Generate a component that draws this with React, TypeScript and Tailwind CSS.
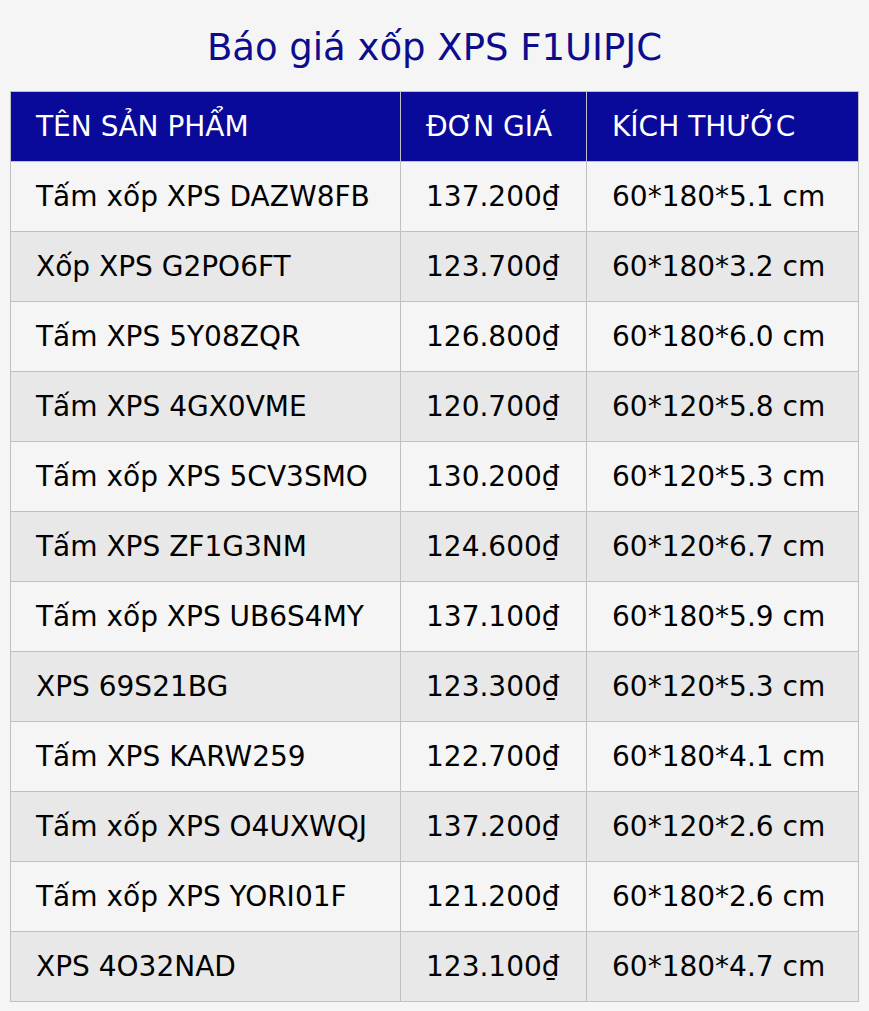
const rows: [string, string, string][] = [
  ['Tấm xốp XPS DAZW8FB', '137.200₫', '60*180*5.1 cm'],
  ['Xốp XPS G2PO6FT', '123.700₫', '60*180*3.2 cm'],
  ['Tấm XPS 5Y08ZQR', '126.800₫', '60*180*6.0 cm'],
  ['Tấm XPS 4GX0VME', '120.700₫', '60*120*5.8 cm'],
  ['Tấm xốp XPS 5CV3SMO', '130.200₫', '60*120*5.3 cm'],
  ['Tấm XPS ZF1G3NM', '124.600₫', '60*120*6.7 cm'],
  ['Tấm xốp XPS UB6S4MY', '137.100₫', '60*180*5.9 cm'],
  ['XPS 69S21BG', '123.300₫', '60*120*5.3 cm'],
  ['Tấm XPS KARW259', '122.700₫', '60*180*4.1 cm'],
  ['Tấm xốp XPS O4UXWQJ', '137.200₫', '60*120*2.6 cm'],
  ['Tấm xốp XPS YORI01F', '121.200₫', '60*180*2.6 cm'],
  ['XPS 4O32NAD', '123.100₫', '60*180*4.7 cm'],
];

export default function App() {
  return (
    <div className="min-h-[1011px] bg-[#f5f5f5] px-[10px] pt-[26px] font-['DejaVu_Sans',sans-serif]">
      <h1 className="text-center text-[37px] leading-[44px] text-[#0c0c8c] mb-[21px]">
        Báo giá xốp XPS F1UIPJC
      </h1>
      <table className="w-[849px] border-collapse text-[28px] leading-[32px]">
        <thead>
          <tr className="bg-[#0a0a9a] text-white">
            <th className="w-[390px] h-[70px] border border-[#c0c0c0] pl-[25px] text-left font-normal">TÊN SẢN PHẨM</th>
            <th className="w-[186px] h-[70px] border border-[#c0c0c0] pl-[25px] text-left font-normal">ĐƠN GIÁ</th>
            <th className="h-[70px] border border-[#c0c0c0] pl-[25px] text-left font-normal">KÍCH THƯỚC</th>
          </tr>
        </thead>
        <tbody>
          {rows.map((r, i) => (
            <tr key={i} className={i % 2 === 0 ? 'bg-[#f5f5f5]' : 'bg-[#e8e8e8]'}>
              <td className="h-[70px] border border-[#c0c0c0] pl-[25px] text-black">{r[0]}</td>
              <td className="h-[70px] border border-[#c0c0c0] pl-[25px] text-black">{r[1]}</td>
              <td className="h-[70px] border border-[#c0c0c0] pl-[25px] text-black">{r[2]}</td>
            </tr>
          ))}
        </tbody>
      </table>
    </div>
  );
}
